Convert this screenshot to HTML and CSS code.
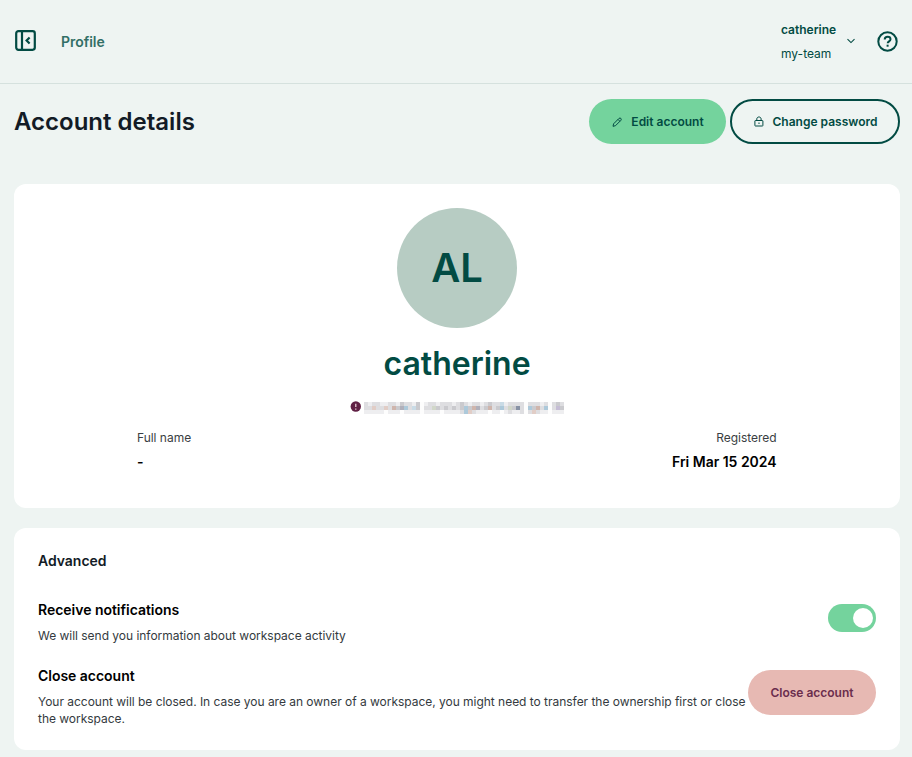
FILE: index.html
```html
<!DOCTYPE html>
<html lang="en">
<head>
<meta charset="utf-8">
<title>Profile</title>
<link rel="stylesheet" href="styles.css">
</head>
<body>
<header class="topbar">
  <svg class="menu-icon" width="22" height="22" viewBox="0 0 22 22" fill="none" stroke="currentColor" stroke-width="2.2"><rect x="1.2" y="1.2" width="18.6" height="18.6" rx="2.2"/><path d="M7 1v19M14.6 7.5l-3 3 3 3"/></svg>
  <span class="crumb">Profile</span>
  <div class="user"><strong>catherine</strong><span>my-team</span></div>
  <svg class="chevron" width="10" height="8" viewBox="0 0 10 8" fill="none" stroke="currentColor" stroke-width="1.1"><path d="M1.5 2.2 5 5.6l3.5-3.4"/></svg>
  <svg class="help" width="22" height="22" viewBox="0 0 22 22" fill="none" stroke="currentColor" stroke-width="2"><circle cx="10.5" cy="10.5" r="9.2"/><path d="M7.7 8.5c.1-3.7 5.8-3.4 5.8-.3 0 2.1-2.8 2.2-2.8 4.1"/><path d="M10.6 13.7v2"/></svg>
</header>
<main>
  <div class="heading">
    <h1>Account details</h1>
    <button class="btn edit"><svg width="12" height="12" viewBox="0 0 12 12" fill="none" stroke="currentColor"><path d="M2 10.3 2.6 7.8 8 2.4C9.3 1.2 11.1 3 9.9 4.3L4.5 9.7zM7 3.4l1.9 1.9"/></svg>Edit account</button>
    <button class="btn password"><svg width="12" height="12" viewBox="0 0 12 12" fill="none" stroke="currentColor"><rect x="1.9" y="4.5" width="8" height="5.5" rx=".5"/><path d="M3.8 4.5V3c0-2.7 4.3-2.7 4.3 0v1.5M6 6.5v1.5"/></svg>Change password</button>
  </div>
  <section class="card profile">
    <div class="avatar">AL</div>
    <h2>catherine</h2>
    <div class="email">
      <svg class="alert" width="12" height="12" viewBox="0 0 12 12"><circle cx="5.8" cy="5.5" r="5.2" fill="#602044"/><path d="M5.8 2.7v3.4M5.8 7.5v1.2" stroke="#f1d9df" stroke-width="1.2"/></svg>
      <svg id="masked" width="200" height="12" viewBox="0 0 50 3" shape-rendering="crispEdges"></svg>
    </div>
    <div class="facts">
      <div><span>Full name</span><b>-</b></div>
      <div class="right"><span>Registered</span><b>Fri Mar 15 2024</b></div>
    </div>
  </section>
  <section class="card advanced">
    <h3>Advanced</h3>
    <div class="row notifications">
      <div><h4>Receive notifications</h4><p>We will send you information about workspace activity</p></div>
      <div class="toggle" role="switch" aria-checked="true"><i></i></div>
    </div>
    <div class="row closing">
      <div><h4>Close account</h4><p>Your account will be closed. In case you are an owner of a workspace, you might need to transfer the ownership first or close the workspace.</p></div>
      <button class="btn close">Close account</button>
    </div>
  </section>
</main>
<script src="mask.js"></script>
</body>
</html>
```
FILE: mask.js
```js
// Each letter is one tile of the redacted address.
const tones = {a:'#fdfdfd', b:'#eeeef0', c:'#dedee1', d:'#cacace', e:'#b0b0bb', f:'#8892a5', r:'#e1cdc6', s:'#cfb5ac', u:'#c9dbe6', v:'#adc9da', g:'#d1d7c9', p:'#c5bdd5'};
const rows = [
  'cbccbbccbdccbdabccbcccbcdcbccbcdccubccccacccbcacdc',
  'ccrccrcsdevcudaccgdcdcdcdvdsecdscdvcgdfcavdscvacpd',
  'bbbbbabbbabbbbabbbbabbbbcvrcbbbabbabcbbcacrcbbabbb'
];
const mask = document.getElementById('masked');
rows.forEach((row, y) => [...row].forEach((key, x) => {
  const tile = document.createElementNS('http://www.w3.org/2000/svg', 'rect');
  const attrs = {x, y, width: 1, height: 1, fill: tones[key]};
  for (const name in attrs) tile.setAttribute(name, attrs[name]);
  mask.append(tile);
}));
```
FILE: styles.css
```css
* { box-sizing: border-box; }
body { margin: 0; height: 757px; overflow: hidden; background: #eef4f2; color: #121b26; font: 12px/16px Inter, sans-serif; }
h1, h2, h3, h4, p { margin: 0; }
svg { display: block; flex: none; }
.topbar { height: 84px; border-bottom: 1px solid #d5e1de; display: flex; align-items: center; padding: 0 13px 0 15px; color: #024b43; }
.crumb { margin-left: 24px; font-size: 14px; font-weight: 600; letter-spacing: -.03px; color: #326f66; }
.menu-icon { margin-top: -1px; }
.user { margin-left: auto; width: 65px; line-height: 24px; }
.user strong, .user span { display: block; }
.user strong { font-weight: 600; }
.chevron { margin-top: -1px; }
.help { margin-left: 21px; }
main { padding: 15px 12px 0 14px; }
.heading { display: flex; align-items: center; height: 45px; gap: 4px; }
h1 { flex: 1; font-size: 24px; line-height: 32px; font-weight: 600; }
.btn { display: flex; align-items: center; justify-content: center; flex: none; height: 45px; padding: 0; border: 0; border-radius: 23px; font: 600 12px/16px Inter, sans-serif; color: #024b43; gap: 8px; }
.edit { width: 137px; background: #74d39d; }
.password { width: 170px; border: 2px solid #024b43; background: transparent; }
.card { background: #fff; border-radius: 12px; }
.profile { height: 324px; margin-top: 40px; padding-top: 24px; display: flex; flex-direction: column; align-items: center; }
.avatar { width: 120px; height: 120px; border-radius: 50%; background: #b7ccc3; color: #024b43; font-size: 40px; font-weight: 600; line-height: 120px; text-align: center; }
h2 { margin-top: 16px; font-size: 32px; line-height: 40px; font-weight: 600; color: #024b43; }
.email { display: flex; align-items: flex-start; gap: 2px; height: 12px; margin-top: 18px; }
.alert { margin-top: -1px; }
.facts { width: 640px; padding-right: .4px; display: flex; justify-content: space-between; margin-top: 16px; letter-spacing: -.02px; }
.facts span, .facts b { display: block; }
.facts span { color: #3a3e42; }
.facts b { margin-top: 8px; font-size: 14px; font-weight: 600; color: #000; }
.right { text-align: right; }
.advanced { height: 222px; margin-top: 20px; padding: 24px; letter-spacing: -.025px; }
h3 { font-size: 14px; line-height: 18px; font-weight: 600; }
.row { display: flex; justify-content: space-between; }
.notifications { margin-top: 30px; height: 66px; }
h4 { font-size: 14px; line-height: 20px; font-weight: 600; color: #000; }
p { margin-top: 7px; line-height: 17px; color: #343a40; }
.toggle { width: 48px; height: 28px; margin-top: 4px; padding: 4px 3px; border-radius: 14px; background: #74d39d; display: flex; justify-content: flex-end; }
.toggle i { width: 20px; height: 20px; border-radius: 50%; background: #fff; }
.close { width: 128px; margin-top: 4px; background: #e7b9b3; color: #6b2d4d; }
```
